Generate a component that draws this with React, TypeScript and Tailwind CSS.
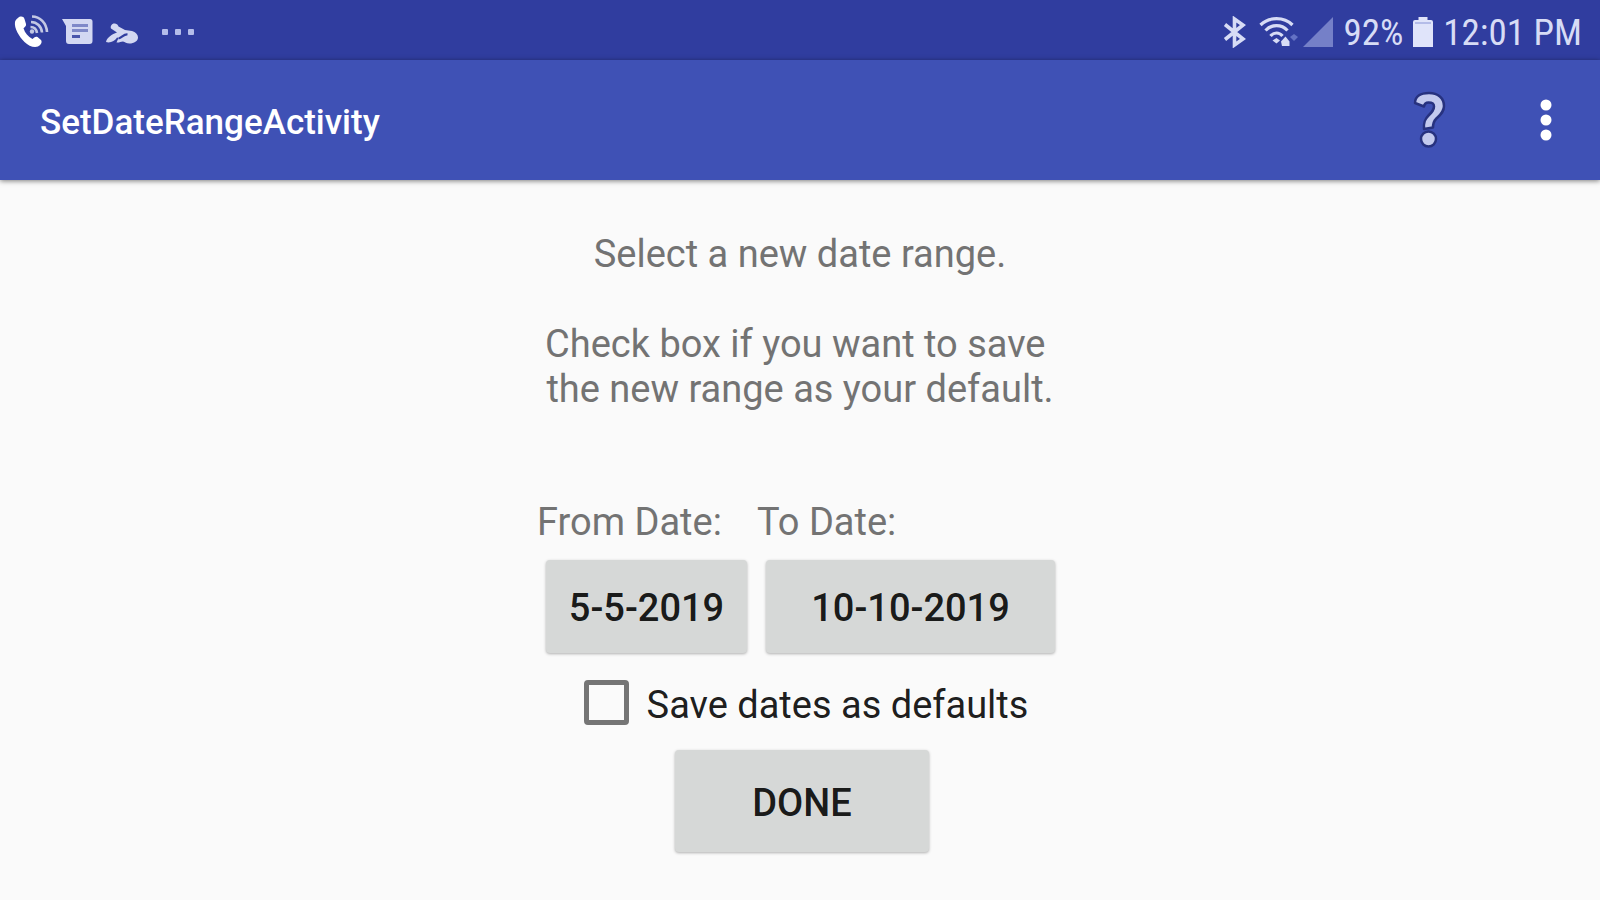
import { useState } from "react";

function CallIcon() {
  return (
    <svg className="h-9 w-9" viewBox="0 0 36 36" aria-hidden="true">
      <path
        d="M4 4c2-2 5.500-2 6.500 1l1.500 5c.5 2-1 2.800-2.500 4.200 1.500 5 4.500 8.300 9 10.800 1.500-1.500 3-3 5-2l3.500 3c1.500 2 0 5-3 6.500-4 1.500-9.500-.5-13.500-4.500C5 22.500 0 14 1 8c.4-2 1.500-3 3-4z"
        fill="#fff"
      />
      <g fill="none" stroke="#c3c8e4" strokeWidth="2.600">
        <path d="M18 2.500c8 0 14.500 6.500 15 15.500" />
        <path d="M17 8c6 0 10.500 4.500 11 10.500" />
        <path d="M16.500 13c3.500 0 6 2.500 6.500 6" />
      </g>
      <circle cx="18" cy="17.500" r="2.200" fill="#c3c8e4" />
    </svg>
  );
}

function MessageIcon() {
  return (
    <svg className="h-7 w-8" viewBox="0 0 32 28" aria-hidden="true">
      <path d="M0 1h28a2.500 2.500 0 0 1 2.500 2.500V23a3 3 0 0 1-3 3H7a3 3 0 0 1-3-3V8z" fill="#d3d8f2" />
      <path d="M10 7.500h16M10 12.500h16" stroke="#7f89c8" strokeWidth="3" />
      <path d="M10 18.500h8" stroke="#4a56ac" strokeWidth="3" />
    </svg>
  );
}

function SwimmerIcon() {
  return (
    <svg className="h-6 w-8" viewBox="0 0 32 24" aria-hidden="true">
      <path
        d="M5 6.500C4 4 6 1 9 1.500c2 .3 3 1.500 3.500 3L19 8l7 1c3.500 1 6 3.500 6 6.500 0 3.500-4 6-8.500 6-3 0-4.500-1.500-6.500-2-2.500 0-4 1.500-6.500 1L12.500 16 11 15.500C9 19 4 21.500 0 20c1-4.500 6-8 11-9.500z"
        fill="#d3d8f2"
      />
      <path d="M12.500 16.500c3.500-.5 5-4.500 9-4" stroke="#303d9f" strokeWidth="2.200" fill="none" />
    </svg>
  );
}

function MoreNotificationsIcon() {
  return (
    <svg className="h-2 w-8" viewBox="0 0 32 8" fill="#b4bdea" aria-hidden="true">
      <rect x="0" y="1" width="6" height="6" rx="1" />
      <rect x="13" y="1" width="6" height="6" rx="1" />
      <rect x="26" y="1" width="6" height="6" rx="1" />
    </svg>
  );
}

function BluetoothIcon() {
  return (
    <svg className="h-8 w-6" viewBox="0 0 24 32" fill="none" stroke="#d7dcf5" strokeWidth="3.600" aria-hidden="true">
      <path d="M2 8.500 20 23l-8.500 6V3L20 9 2 23.500" />
    </svg>
  );
}

function WifiIcon() {
  return (
    <svg className="h-8 w-10" viewBox="0 0 40 32" fill="none" aria-hidden="true">
      <g stroke="#d7dcf5" strokeWidth="3.200">
        <path d="M1.500 9C10 .5 25 .5 33.500 9" />
        <path d="M6.500 14.500c6-6.500 16-6.500 22 0" />
        <path d="M11.500 20c3.500-4 8.500-4 12 0" />
      </g>
      <path d="m13.500 24.500 4-2.500 3.500 2.500-3.500 3z" fill="#d7dcf5" />
      <path d="m22 25.500 4.500-5 4 5V30H23z" fill="#d7dcf5" />
      <path d="m31 21 4-3 4 3-4 4z" fill="#6472c4" />
    </svg>
  );
}

function SignalIcon() {
  return (
    <svg className="h-8 w-[30px]" viewBox="0 0 30 32" aria-hidden="true">
      <path d="M30 1v30H0z" fill="#7580c8" />
    </svg>
  );
}

function BatteryIcon() {
  return (
    <svg className="h-8 w-5" viewBox="0 0 20 32" aria-hidden="true">
      <path d="M5.500 1h9v3H18a2 2 0 0 1 2 2v25H0V6a2 2 0 0 1 2-2h3.500z" fill="#e0e4fa" />
      <path d="M2 7h16" stroke="#b4bce8" strokeWidth="2" />
    </svg>
  );
}

function HelpIcon() {
  return (
    <svg className="h-[60px] w-9" viewBox="0 0 36 60" aria-hidden="true">
      <path
        d="M4 13C4 6 10 3 18 3c9 0 15 5 15 13 0 6-4 9-8 13-2.500 2.500-3 4-3 8.500l-9 1.500c-.5-7 1-10 4.500-13.500C21 22 23 20 23 16.500S21 12.500 17.500 12.500c-3 0-4 1-4.500 4z"
        fill="#c3caee"
        stroke="#27327f"
        strokeWidth="2.500"
        strokeLinejoin="round"
      />
      <circle cx="17.500" cy="49" r="7.500" fill="#c3caee" stroke="#27327f" strokeWidth="2.500" />
    </svg>
  );
}

function OverflowIcon() {
  return (
    <svg className="h-11 w-3" viewBox="0 0 12 44" fill="#fff" aria-hidden="true">
      <circle cx="6" cy="7" r="5.500" />
      <circle cx="6" cy="22" r="5.500" />
      <circle cx="6" cy="37" r="5.500" />
    </svg>
  );
}

const raisedButton =
  "rounded-[4px] bg-[#d6d8d7] pt-1 font-medium text-[38px] leading-[45px] text-black/90 shadow-[0_1px_3px_rgba(0,0,0,0.3)]";

export default function App() {
  const [saveDefaults, setSaveDefaults] = useState(false);

  return (
    <div className="min-h-screen bg-[#fafafa] font-['Roboto',sans-serif]">
      <div className="flex h-[60px] items-center justify-between bg-[#303d9f] pr-[18px] pl-[14px]">
        <div className="flex items-center pt-1">
          <CallIcon />
          <span className="ml-3 flex"><MessageIcon /></span>
          <span className="ml-3 flex pt-1"><SwimmerIcon /></span>
          <span className="ml-6 flex"><MoreNotificationsIcon /></span>
        </div>
        <div className="flex items-center pt-1 font-['Roboto_Condensed','Roboto',sans-serif] text-[37px] leading-[45px] text-[#d7dcf5]">
          <BluetoothIcon />
          <span className="ml-3 flex"><WifiIcon /></span>
          <span className="ml-1 flex"><SignalIcon /></span>
          <span className="ml-[10px]">92%</span>
          <span className="ml-[10px] flex"><BatteryIcon /></span>
          <span className="ml-[10px]">12:01 PM</span>
        </div>
      </div>

      <header className="flex h-[120px] items-center justify-between bg-[#3f51b5] pr-[48px] pl-10 shadow-[0_1px_5px_rgba(0,0,0,0.5)]">
        <h1 className="pt-1 text-[35px] leading-[45px] font-medium text-white">SetDateRangeActivity</h1>
        <div className="flex items-center gap-[93px]">
          <button type="button" aria-label="Help" className="flex">
            <HelpIcon />
          </button>
          <button type="button" aria-label="More options" className="flex">
            <OverflowIcon />
          </button>
        </div>
      </header>

      <main className="flex flex-col items-center pt-[52px] pb-8 text-[38px] leading-[45px] text-[#737373]">
        <p>Select a new date range.</p>
        <p className="mt-[45px] text-center whitespace-pre">
          {"Check box if you want to save \nthe new range as your default."}
        </p>

        <div className="mt-[88px] grid grid-cols-[220px_306px]">
          <label htmlFor="from-date">From Date:</label>
          <label htmlFor="to-date">To Date:</label>
          <button id="from-date" type="button" className={`${raisedButton} mt-[15px] mr-[10px] ml-[9px] h-[93px]`}>
            5-5-2019
          </button>
          <button id="to-date" type="button" className={`${raisedButton} mt-[15px] mr-2 ml-[9px] h-[93px]`}>
            10-10-2019
          </button>
        </div>

        <div className="flex flex-col items-center pl-1">
          <label className="mt-[27px] flex items-center gap-[18px] pl-2 text-black/90">
            <input
              type="checkbox"
              checked={saveDefaults}
              onChange={(event) => setSaveDefaults(event.target.checked)}
              className="h-[45px] w-[45px] appearance-none rounded-[4px] border-[5px] border-[#757575] checked:bg-[#ff4081]"
            />
            <span className="pt-[3px] -mb-[3px]">Save dates as defaults</span>
          </label>

          <button type="button" className={`${raisedButton} mt-[25px] h-[102px] w-[254px]`}>
            DONE
          </button>
        </div>
      </main>
    </div>
  );
}
